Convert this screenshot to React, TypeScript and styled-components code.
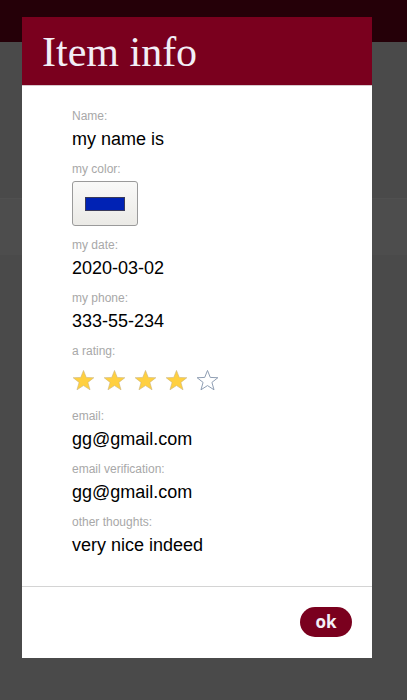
import React from "react";
import styled, { createGlobalStyle } from "styled-components";

const Global = createGlobalStyle`
  html, body { margin: 0; padding: 0; }
  body {
    background: #4a4a4a;
    font-family: "Liberation Sans", Arial, sans-serif;
    width: 407px;
    height: 700px;
    overflow: hidden;
  }
`;

const Page = styled.div`
  position: relative;
  width: 407px;
  height: 700px;
  background: #4a4a4a;
  overflow: hidden;
`;

const TopBar = styled.div`
  height: 42px;
  background: #250008;
`;

const Band = styled.div`
  margin-top: 156px;
  height: 56px;
  background: #4d4d4d;
  border-top: 1px solid #505050;
`;

const Overlay = styled.div`
  position: absolute;
  inset: 0;
  display: flex;
  justify-content: flex-start;
  align-items: flex-start;
  padding: 17px 0 0 22px;
`;

const Modal = styled.div`
  width: 350px;
  background: #ffffff;
  display: flex;
  flex-direction: column;
`;

const Header = styled.div`
  height: 69px;
  background: #7a001e;
  border-bottom: 1px solid #d8c8cc;
  display: flex;
  align-items: center;
  padding-left: 20px;
  box-sizing: border-box;
`;

const Title = styled.h1`
  margin: 0;
  font-family: "Liberation Serif", "Times New Roman", serif;
  font-weight: normal;
  font-size: 42px;
  color: #f2eef6;
  line-height: 1;
  padding-top: 1px;
`;

const Body = styled.div`
  height: 501px;
  box-sizing: border-box;
  padding: 23px 20px 0 50px;
  border-bottom: 1px solid #d4d4d4;
`;

const Field = styled.div<{ $gap?: number }>`
  display: flex;
  flex-direction: column;
  align-items: flex-start;
  margin-bottom: ${(p) => (p.$gap ?? 12)}px;
`;

const Label = styled.div`
  font-size: 12px;
  line-height: 15px;
  color: #a8a8a8;
  margin-bottom: 4px;
`;

const Value = styled.div`
  font-size: 18px;
  line-height: 22px;
  color: #000000;
`;

const ColorButton = styled.div`
  width: 66px;
  height: 45px;
  box-sizing: border-box;
  border: 1px solid #9a9a9a;
  border-radius: 3px;
  background: linear-gradient(#f9f9f8, #ebeae6);
  display: flex;
  align-items: center;
  justify-content: center;
`;

const Swatch = styled.div<{ $color: string }>`
  width: 40px;
  height: 14px;
  box-sizing: border-box;
  border: 1px solid #3a3a5a;
  background: ${(p) => p.$color};
`;

const Stars = styled.div`
  display: flex;
  gap: 8px;
  height: 34px;
  align-items: center;
  padding-top: 1px;
  box-sizing: border-box;
`;

const Footer = styled.div`
  display: flex;
  justify-content: flex-end;
  padding: 20px 20px 21px;
`;

const OkButton = styled.button`
  width: 52px;
  height: 30px;
  border: none;
  border-radius: 15px;
  background: #7a001e;
  color: #f4f0f8;
  font-family: "Open Sans", "DejaVu Sans", sans-serif;
  font-weight: bold;
  font-size: 17px;
  padding: 0;
  line-height: 30px;
`;

const Star: React.FC<{ filled: boolean }> = ({ filled }) => (
  <svg width="23" height="23" viewBox="0 0 24 23">
    <polygon
      points="12,1 14.9,8.3 22.8,8.6 16.6,13.5 18.8,21.2 12,16.8 5.2,21.2 7.4,13.5 1.2,8.6 9.1,8.3"
      fill={filled ? "#ffd040" : "#ffffff"}
      stroke={filled ? "#c9b27a" : "#8a9ab0"}
      strokeWidth={filled ? 0.6 : 1}
      strokeLinejoin="miter"
    />
  </svg>
);

export default function App() {
  const rating = 4;
  return (
    <Page>
      <Global />
      <TopBar />
      <Band />
      <Overlay>
        <Modal>
          <Header>
            <Title>Item info</Title>
          </Header>
          <Body>
            <Field>
              <Label>Name:</Label>
              <Value>my name is</Value>
            </Field>
            <Field $gap={12}>
              <Label>my color:</Label>
              <ColorButton>
                <Swatch $color="#0022b4" />
              </ColorButton>
            </Field>
            <Field>
              <Label>my date:</Label>
              <Value>2020-03-02</Value>
            </Field>
            <Field>
              <Label>my phone:</Label>
              <Value>333-55-234</Value>
            </Field>
            <Field>
              <Label>a rating:</Label>
              <Stars>
                {[1, 2, 3, 4, 5].map((i) => (
                  <Star key={i} filled={i <= rating} />
                ))}
              </Stars>
            </Field>
            <Field>
              <Label>email:</Label>
              <Value>gg@gmail.com</Value>
            </Field>
            <Field>
              <Label>email verification:</Label>
              <Value>gg@gmail.com</Value>
            </Field>
            <Field>
              <Label>other thoughts:</Label>
              <Value>very nice indeed</Value>
            </Field>
          </Body>
          <Footer>
            <OkButton>ok</OkButton>
          </Footer>
        </Modal>
      </Overlay>
    </Page>
  );
}
